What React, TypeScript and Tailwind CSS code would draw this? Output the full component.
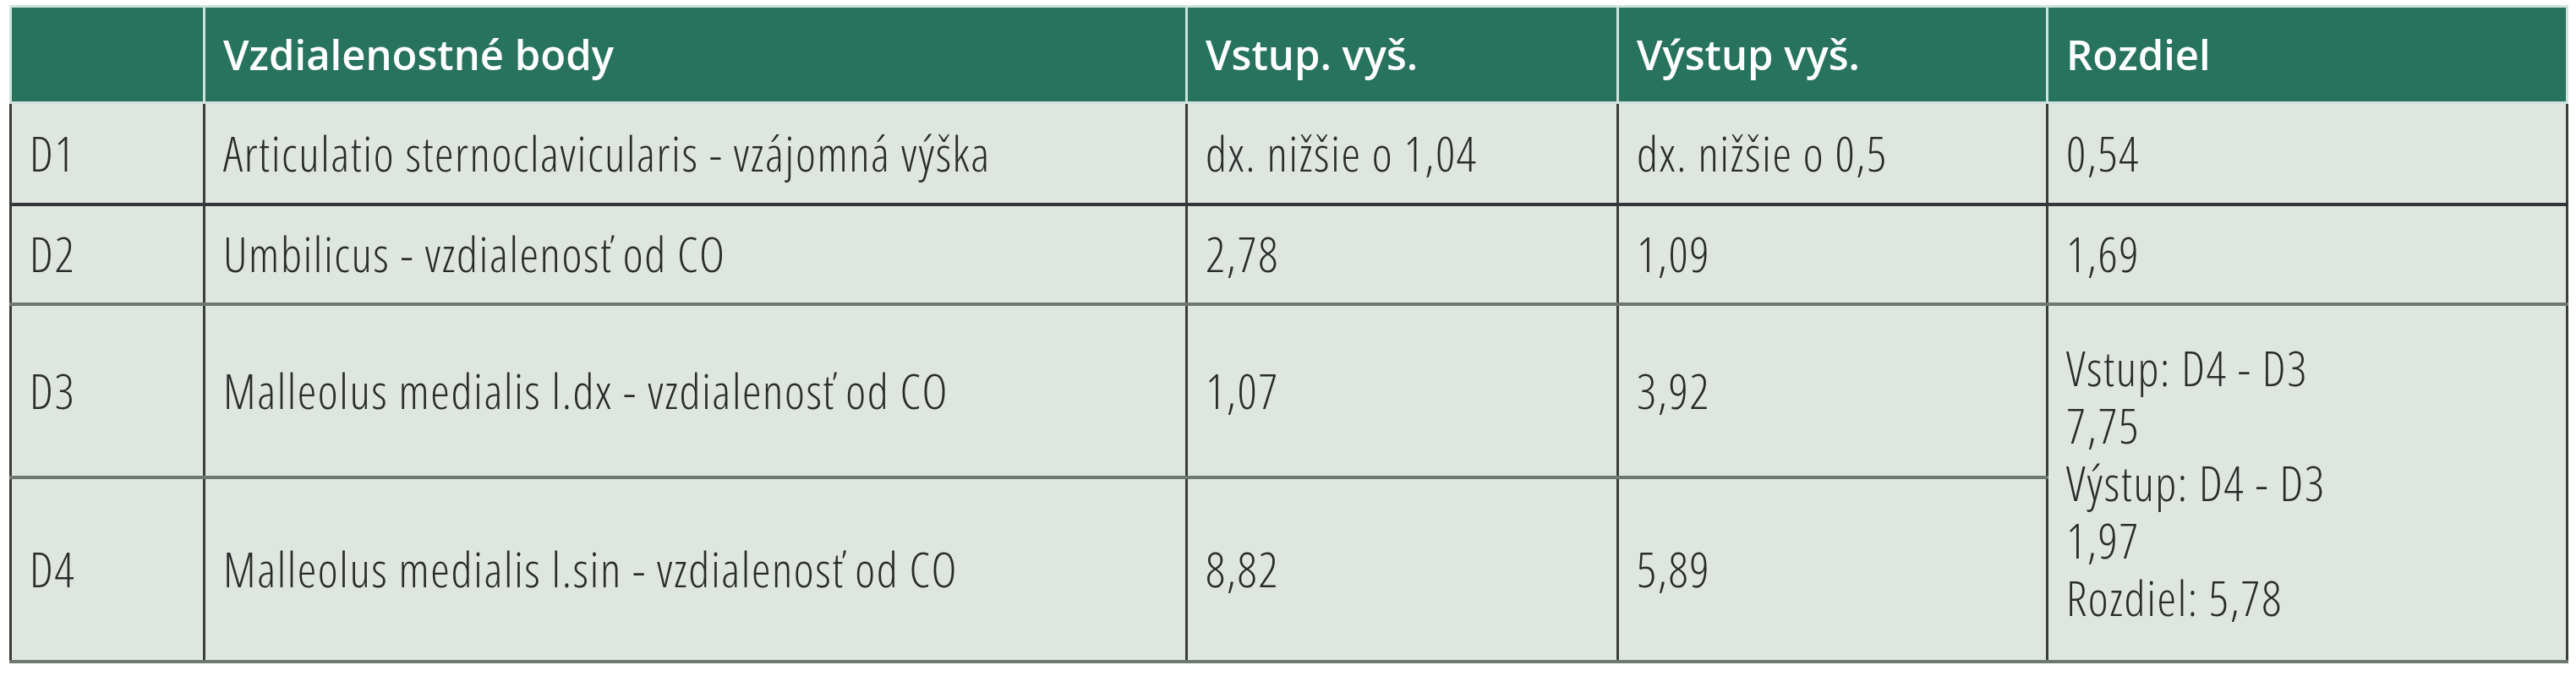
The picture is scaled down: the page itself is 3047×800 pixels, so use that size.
import React from "react";

type Row = {
  id: string;
  name: string;
  vstup: string;
  vystup: string;
  rozdiel?: string;
  h: string;
};

const rows: Row[] = [
  { id: "D1", name: "Articulatio sternoclavicularis - vzájomná výška", vstup: "dx. nižšie o 1,04", vystup: "dx. nižšie o 0,5", rozdiel: "0,54", h: "h-[120px]" },
  { id: "D2", name: "Umbilicus - vzdialenosť od CO", vstup: "2,78", vystup: "1,09", rozdiel: "1,69", h: "h-[118px]" },
  { id: "D3", name: "Malleolus medialis l.dx - vzdialenosť od CO", vstup: "1,07", vystup: "3,92", h: "h-[205px]" },
  { id: "D4", name: "Malleolus medialis l.sin - vzdialenosť od CO", vstup: "8,82", vystup: "5,89", h: "h-[218px]" },
];

const merged = ["Vstup: D4 - D3", "7,75", "Výstup: D4 - D3", "1,97", "Rozdiel: 5,78"];

export default function App() {
  const th = "px-[21px] text-left align-middle font-semibold text-white text-[49px] [font-stretch:88%] border-x-[3px] border-[#cfe3dc]";
  const td = "px-[21px] text-left align-middle text-[57px] tracking-[1.6px] [font-stretch:75%] border-x-[3px] border-[#3a3d3b]";

  return (
    <div className="w-[3047px] h-[800px] bg-white pt-[6px] pl-[11px]">
      <table className="w-[3024px] table-fixed border-collapse font-['Open_Sans','Liberation_Sans',sans-serif] leading-none">
        <colgroup>
          <col className="w-[229px]" />
          <col className="w-[1162px]" />
          <col className="w-[510px]" />
          <col className="w-[508px]" />
          <col className="w-[615px]" />
        </colgroup>
        <thead>
          <tr className="h-[114px] bg-[#27735d] border-y-[3px] border-[#cfe3dc]">
            <th className={th}></th>
            <th className={th}>Vzdialenostné body</th>
            <th className={th}>Vstup. vyš.</th>
            <th className={th}>Výstup vyš.</th>
            <th className={th}>Rozdiel</th>
          </tr>
        </thead>
        <tbody className="bg-[#dfe6e0] text-[#2a2c2b] font-light">
          {rows.map((r, i) => (
            <tr
              key={r.id}
              className={`${r.h} border-b-[4px] ${i === 0 ? "border-[#34373a]" : "border-[#6f7771]"}`}
            >
              <td className={td}>{r.id}</td>
              <td className={td}>{r.name}</td>
              <td className={td}>{r.vstup}</td>
              <td className={td}>{r.vystup}</td>
              {r.rozdiel !== undefined && <td className={td}>{r.rozdiel}</td>}
              {i === 2 && (
                <td rowSpan={2} className={`${td} leading-[68px] border-b-[4px] border-b-[#6f7771]`}>
                  {merged.map((m) => (
                    <div key={m}>{m}</div>
                  ))}
                </td>
              )}
            </tr>
          ))}
        </tbody>
      </table>
    </div>
  );
}
